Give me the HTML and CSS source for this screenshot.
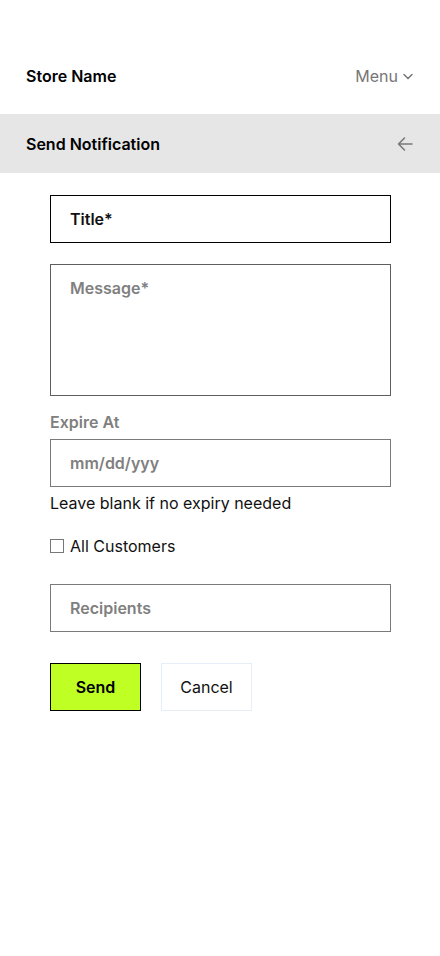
FILE: index.html
```html
<!DOCTYPE html>
<html lang="en">
<head>
  <meta charset="UTF-8">
  <meta name="viewport" content="width=device-width, initial-scale=1.0">
  <title>Send Notification</title>
  <link rel="stylesheet" href="styles.css">
</head>
<body>
  <header class="top-bar">
    <span class="store-name">Store Name</span>
    <button class="menu-toggle">Menu
      <svg width="12" height="12" viewBox="0 0 12 12" fill="none" stroke="currentColor" stroke-width="1.5" stroke-linecap="round" stroke-linejoin="round"><path d="M2 4.5 6 8.5l4-4"/></svg>
    </button>
  </header>

  <div class="page-bar">
    <h1>Send Notification</h1>
    <svg class="back-icon" width="18" height="18" viewBox="0 0 18 18" fill="none" stroke="currentColor" stroke-width="1.6" stroke-linecap="round" stroke-linejoin="round"><path d="M16 9H2.5M8.5 3 2.5 9l6 6"/></svg>
  </div>

  <form class="notify-form">
    <input type="text" class="field field-title" placeholder="Title*">
    <textarea class="field field-message" placeholder="Message*"></textarea>

    <label class="field-label">Expire At</label>
    <input type="text" class="field field-date" placeholder="mm/dd/yyy">
    <p class="help-text">Leave blank if no expiry needed</p>

    <label class="check-row">
      <input type="checkbox" class="check-box">
      <span>All Customers</span>
    </label>

    <input type="text" class="field field-recipients" placeholder="Recipients">

    <div class="actions">
      <button type="button" class="btn btn-send">Send</button>
      <button type="button" class="btn btn-cancel">Cancel</button>
    </div>
  </form>
</body>
</html>
```

FILE: styles.css
```css
/* Base */
body {
  font-family: Inter, "Noto Sans", Arial, sans-serif;
  background-color: #ffffff;
  color: #111111;
  margin: 0;
  padding: 0;
}

/* Top bar */
.top-bar {
  height: 114px;
  box-sizing: border-box;
  padding: 38px 26px 0 26px;
  display: flex;
  justify-content: space-between;
  align-items: center;
}

.store-name {
  font-size: 16px;
  font-weight: 600;
  color: #000000;
}

.menu-toggle {
  display: flex;
  align-items: center;
  gap: 4px;
  border: none;
  background: none;
  padding: 0;
  font-family: inherit;
  font-size: 16px;
  color: #767676;
  cursor: pointer;
}

/* Page title bar */
.page-bar {
  height: 59px;
  background-color: #e6e6e6;
  padding: 0 26px;
  display: flex;
  justify-content: space-between;
  align-items: center;
}

.page-bar h1 {
  font-size: 16px;
  font-weight: 600;
  margin: 0;
  color: #000000;
}

.back-icon {
  color: #7a7a7a;
}

/* Form */
.notify-form {
  padding: 22px 49px 0 50px;
  display: flex;
  flex-direction: column;
}

.field {
  display: block;
  width: 100%;
  height: 48px;
  box-sizing: border-box;
  border: 1px solid #7a7a7a;
  border-radius: 0;
  padding: 0 19px;
  font-family: inherit;
  font-size: 16px;
  font-weight: 600;
  color: #111111;
  background: #ffffff;
  outline: none;
}

.field::placeholder {
  color: #808080;
  font-weight: 600;
}

.field-title {
  border-color: #000000;
}

.field-title::placeholder {
  color: #111111;
}

.field-message {
  height: 132px;
  margin-top: 21px;
  padding-top: 13px;
  resize: none;
  border-color: #5e5e5e;
}

.field-label {
  margin: 16px 0 7px 0;
  font-size: 16px;
  line-height: 20px;
  font-weight: 600;
  color: #808080;
}

.help-text {
  margin: 6px 0 0 0;
  font-size: 16px;
  line-height: 20px;
  color: #111111;
}

.check-row {
  margin-top: 23px;
  height: 20px;
  display: flex;
  align-items: center;
  gap: 6px;
  font-size: 16px;
}

.check-box {
  appearance: none;
  width: 14px;
  height: 14px;
  margin: 0;
  border: 1px solid #777777;
  background: #ffffff;
}

.field-recipients {
  margin-top: 28px;
}

/* Buttons */
.actions {
  margin-top: 31px;
  display: flex;
  gap: 20px;
}

.btn {
  width: 91px;
  height: 48px;
  font-family: inherit;
  font-size: 16px;
  cursor: pointer;
}

.btn-send {
  background-color: #bfff24;
  border: 1px solid #000000;
  font-weight: 600;
  color: #000000;
}

.btn-cancel {
  background-color: #ffffff;
  border: 1px solid #e6eef8;
  color: #111111;
}
```
